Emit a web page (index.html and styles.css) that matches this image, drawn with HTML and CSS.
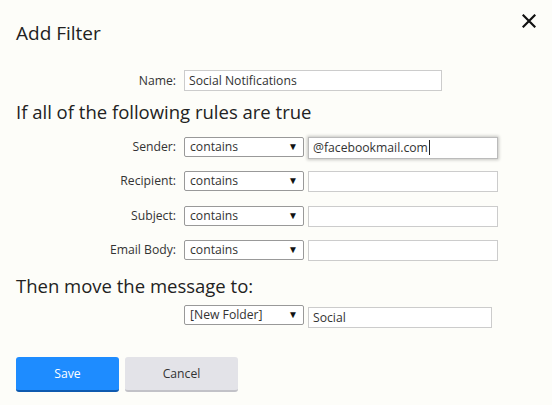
FILE: index.html
```html
<!DOCTYPE html>
<html>
<head>
<meta charset="utf-8">
<link rel="stylesheet" href="styles.css">
</head>
<body>
<div class="dialog">
  <div class="header">
    <h1 class="title">Add Filter</h1>
    <button class="close" aria-label="Close">
      <svg width="14" height="14" viewBox="0 0 14 14"><path d="M1.5 1.5 L12.5 12.5 M12.5 1.5 L1.5 12.5" stroke="#111" stroke-width="2.2" stroke-linecap="square"/></svg>
    </button>
  </div>

  <div class="row row-name">
    <label class="label">Name:</label>
    <div class="input wide">Social Notifications</div>
  </div>

  <h2 class="section">If all of the following rules are true</h2>

  <div class="rules">
    <div class="row">
      <label class="label">Sender:</label>
      <div class="select">contains<span class="arrow">&#9660;</span></div>
      <div class="input rule focused">@facebookmail.com<span class="caret"></span></div>
    </div>
    <div class="row">
      <label class="label">Recipient:</label>
      <div class="select">contains<span class="arrow">&#9660;</span></div>
      <div class="input rule"></div>
    </div>
    <div class="row">
      <label class="label">Subject:</label>
      <div class="select">contains<span class="arrow">&#9660;</span></div>
      <div class="input rule"></div>
    </div>
    <div class="row">
      <label class="label">Email Body:</label>
      <div class="select">contains<span class="arrow">&#9660;</span></div>
      <div class="input rule"></div>
    </div>
  </div>

  <h2 class="section section-move">Then move the message to:</h2>

  <div class="row row-move">
    <span class="label"></span>
    <div class="select">[New Folder]<span class="arrow">&#9660;</span></div>
    <div class="input folder">Social</div>
  </div>

  <div class="actions">
    <button class="btn btn-primary">Save</button>
    <button class="btn btn-secondary">Cancel</button>
  </div>
</div>
</body>
</html>
```
FILE: styles.css
```css
* { box-sizing: border-box; }
html, body { margin: 0; padding: 0; }
body {
  background: #fdfdf9;
  font-family: "Open Sans", "Noto Sans", sans-serif;
  color: #333;
  width: 552px;
  height: 405px;
  overflow: hidden;
}
.dialog {
  padding: 0 16px;
}
.header {
  display: flex;
  justify-content: space-between;
  align-items: flex-start;
  height: 62px;
}
.title {
  margin: 20px 0 0 0;
  font-size: 19px;
  font-weight: 400;
  line-height: 26px;
  color: #222;
}
.close {
  margin: 13px -1px 0 0;
  padding: 0;
  width: 16px;
  height: 16px;
  border: 0;
  background: none;
  display: flex;
  align-items: center;
  justify-content: center;
}
.row {
  display: flex;
  align-items: center;
  font-size: 12.2px;
}
.row-name { margin-top: 8px; }
.label {
  width: 160px;
  margin-right: 8px;
  text-align: right;
  color: #333;
}
.input {
  height: 21px;
  border: 1px solid #ccc;
  background: #fff;
  padding: 0 4px;
  line-height: 19px;
  color: #333;
  position: relative;
}
.wide { width: 258px; }
.rule { width: 190px; margin-left: 4px; }
.folder { width: 184px; margin-left: 4px; height: 21px; margin-top: 2px; }
.focused {
  border-color: #bbb;
  box-shadow: 0 0 3px 1px rgba(0,0,0,0.22);
  height: 22px;
  line-height: 20px;
}
.caret {
  display: inline-block;
  width: 1px;
  height: 15px;
  background: #222;
  vertical-align: -3px;
  margin-left: 1px;
}
.select {
  width: 120px;
  height: 20px;
  border: 1px solid #999;
  border-radius: 2px;
  background: #fff;
  padding: 0 5px;
  line-height: 18px;
  color: #333;
  position: relative;
}
.arrow {
  position: absolute;
  right: 5px;
  top: -1px;
  font-size: 10px;
  color: #111;
  line-height: 18px;
}
.section {
  margin: 8px 0 0 0;
  font-size: 18.5px;
  font-weight: 400;
  line-height: 26px;
  color: #222;
}
.rules {
  margin-top: 12px;
  display: flex;
  flex-direction: column;
  gap: 14.3px;
}
.rules .row {
  height: 20px;
  align-items: flex-start;
}
.rules .label { line-height: 20px; }
.section-move { margin-top: 13px; }
.row-move { margin-top: 6px; align-items: flex-start; }
.actions {
  margin-top: 29px;
  display: flex;
  gap: 6px;
}
.btn {
  height: 35px;
  border: 0;
  border-radius: 3px;
  font-family: "Open Sans", "Noto Sans", sans-serif;
  font-size: 12.2px;
  padding: 0;
}
.btn-primary {
  width: 103px;
  background: #1e8cff;
  color: #fff;
  border-bottom: 2px solid #0e5aaf;
}
.btn-secondary {
  width: 113px;
  background: #e3e3e8;
  color: #333;
  border-bottom: 2px solid #c2c2c8;
}
```
